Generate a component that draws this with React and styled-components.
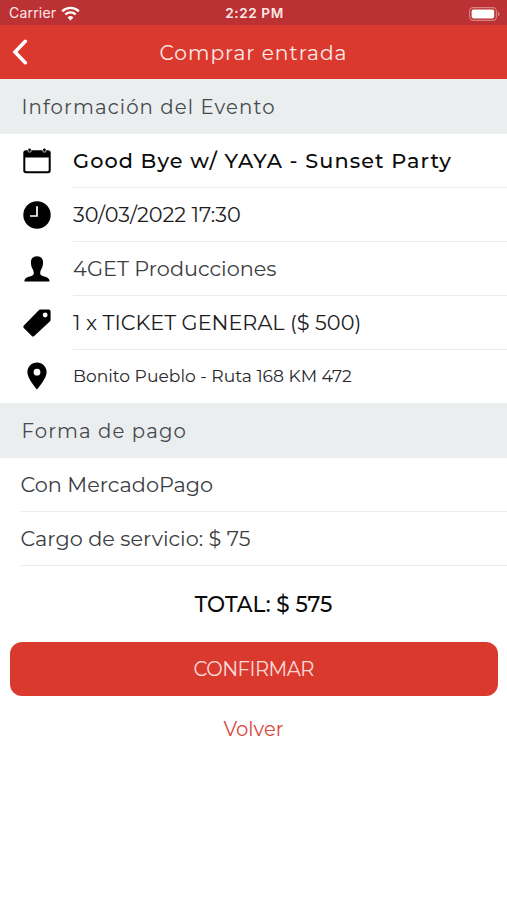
import React from "react";
import styled, { createGlobalStyle } from "styled-components";

const App = () => {
  return (
    <>
      <GlobalStyle />
      <Screen>
        <StatusBar>
          <Carrier>
            <Label $size={14} $track={0.2}>Carrier</Label>
            <WifiIcon />
          </Carrier>
          <Label $size={13.6} $track={0.6} $weight={600}>2:22 PM</Label>
          <BatterySlot>
            <BatteryIcon />
          </BatterySlot>
        </StatusBar>
        <NavBar>
          <BackButton aria-label="Volver">
            <svg width="16" height="26" viewBox="0 0 16 26">
              <path
                d="M13.3 2.3 L3 13 L13.3 23.7"
                fill="none"
                stroke="#fff"
                strokeWidth="3.6"
                strokeLinecap="round"
                strokeLinejoin="miter"
              />
            </svg>
          </BackButton>
          <Label as="h1" $size={20.2} $track={1} $drop={1.5}>Comprar entrada</Label>
        </NavBar>

        <SectionTitle>
          <Label as="h2" $size={19.7} $track={1.12} $drop={2.5}>Información del Evento</Label>
        </SectionTitle>
        <List>
          <EventRow>
            <CalendarIcon />
            <RowBody>
              <Label $size={20.8} $track={1.07} $weight={500} $drop={2} $color="#0b0b0b">
                Good Bye w/ YAYA - Sunset Party
              </Label>
            </RowBody>
          </EventRow>
          <EventRow>
            <ClockIcon />
            <RowBody>
              <Label $size={20.8} $drop={2} $color="#1c1c1e">30/03/2022 17:30</Label>
            </RowBody>
          </EventRow>
          <EventRow>
            <PersonIcon />
            <RowBody>
              <Label $size={20.8} $drop={2} $color="#3b3e42">4GET Producciones</Label>
            </RowBody>
          </EventRow>
          <EventRow>
            <TagIcon />
            <RowBody>
              <Label $size={20.8} $drop={2} $color="#1c1c1e">1 x TICKET GENERAL ($ 500)</Label>
            </RowBody>
          </EventRow>
          <EventRow $last>
            <PinIcon />
            <RowBody $last>
              <Label $size={17.15} $color="#28282a">
                Bonito Pueblo - Ruta 168 KM 472
              </Label>
            </RowBody>
          </EventRow>
        </List>

        <SectionTitle>
          <Label as="h2" $size={19.7} $track={1.12} $drop={2.5}>Forma de pago</Label>
        </SectionTitle>
        <List>
          <PaymentRow>
            <Label $size={20.8} $drop={2} $color="#3b3e42">Con MercadoPago</Label>
          </PaymentRow>
          <PaymentRow>
            <Label $size={20.8} $drop={2} $color="#3b3e42">Cargo de servicio: $ 75</Label>
          </PaymentRow>
        </List>

        <Total>
          <Label $size={21.5} $weight={500} $drop={2} $color="#0b0b0b">TOTAL: $ 575</Label>
        </Total>
        <ConfirmButton>
          <Label $size={19.6} $track={-0.5}>CONFIRMAR</Label>
        </ConfirmButton>
        <CancelButton>
          <Label $size={19.6}>Volver</Label>
        </CancelButton>
      </Screen>
    </>
  );
};

const WifiIcon = () => (
  <svg width="19" height="15" viewBox="0 0 19 15" fill="none" stroke="#fff">
    <path d="M1.2 5.3 A11.8 11.8 0 0 1 17.8 5.3" strokeWidth="2.4" />
    <path d="M4.3 8.5 A7.4 7.4 0 0 1 14.7 8.5" strokeWidth="2.3" />
    <path d="M9.5 14.4 L6.6 11.5 A4.1 4.1 0 0 1 12.4 11.5 Z" fill="#fff" stroke="none" />
  </svg>
);

const BatteryIcon = () => (
  <svg width="31" height="14" viewBox="0 0 31 14">
    <rect x="0.6" y="0.6" width="26.8" height="12.8" rx="3.6" fill="none" stroke="#d98381" strokeWidth="1.1" />
    <rect x="2.6" y="2.6" width="22.6" height="8.8" rx="1.8" fill="#fff" />
    <path d="M28.8 4.6 Q30.6 5.4 30.6 7 Q30.6 8.6 28.8 9.4 Z" fill="#d98381" />
  </svg>
);

const CalendarIcon = () => (
  <Icon viewBox="0 0 28 28">
    <path
      fillRule="evenodd"
      d="M3 3.2 H5.2 V2.6 Q5.2 1.4 6.6 1.4 Q8 1.4 8 2.6 V3.2 H20 V2.6 Q20 1.4 21.4 1.4 Q22.8 1.4 22.8 2.6 V3.2 H25 Q27.7 3.2 27.7 5.8 V23.6 Q27.7 26.2 25 26.2 H3 Q0.3 26.2 0.3 23.6 V5.8 Q0.3 3.2 3 3.2 Z M2.3 10.6 V23 Q2.3 24.3 3.6 24.3 H24.4 Q25.7 24.3 25.7 23 V10.6 Z"
    />
    <path d="M5.2 3 V5 H8 V3 M20 3 V5 H22.8 V3" fill="none" stroke="#fff" strokeWidth="0.6" />
  </Icon>
);

const ClockIcon = () => (
  <Icon viewBox="0 0 28 28">
    <circle cx="14" cy="14" r="13.7" />
    <path d="M14 5.2 V15 H7" fill="none" stroke="#fff" strokeWidth="1.7" />
  </Icon>
);

const PersonIcon = () => (
  <Icon viewBox="0 0 28 28">
    <path d="M14 1.3 C18.4 1.3 20.4 4.3 20 8.4 C19.9 10.5 19.4 11.9 18.8 13.2 C17.8 15.2 17.2 16.4 17.2 18.3 C17.2 20 18.7 20.9 21.3 21.6 C24.3 22.4 26.6 23.5 26.6 26.6 H1.4 C1.4 23.5 3.7 22.4 6.7 21.6 C9.3 20.9 10.8 20 10.8 18.3 C10.8 16.4 10.2 15.2 9.2 13.2 C8.6 11.9 8.1 10.5 8 8.4 C7.6 4.3 9.6 1.3 14 1.3 Z" />
  </Icon>
);

const TagIcon = () => (
  <Icon viewBox="0 0 28 28">
    <path
      fillRule="evenodd"
      d="M17.6 0.6 L25.8 0.6 Q27.6 0.7 27.6 2.4 V10.7 Q27.6 11.8 26.8 12.6 L11.2 26.9 Q9.9 28 8.8 26.9 L0.8 18.9 Q-0.3 17.7 0.9 16.5 L15.5 1.5 Q16.4 0.6 17.6 0.6 Z M22.2 3.6 A2.4 2.4 0 1 0 22.2 8.4 A2.4 2.4 0 1 0 22.2 3.6 Z"
    />
  </Icon>
);

const PinIcon = () => (
  <Icon viewBox="0 0 28 28">
    <path
      fillRule="evenodd"
      d="M14 0.6 C19.3 0.6 23.6 4.8 23.6 10.1 C23.6 17 14 27.5 14 27.5 C14 27.5 4.4 17 4.4 10.1 C4.4 4.8 8.7 0.6 14 0.6 Z M14 6.8 A3.4 3.4 0 1 0 14 13.6 A3.4 3.4 0 1 0 14 6.8 Z"
    />
  </Icon>
);

const GlobalStyle = createGlobalStyle`
  * {
    box-sizing: border-box;
    margin: 0;
    padding: 0;
  }
  body {
    background-color: white;
    font-family: Montserrat, Inter, sans-serif;
  }
  button {
    border: none;
    background: none;
    font-family: inherit;
    color: inherit;
  }
`;

const Screen = styled.main`
  display: flex;
  flex-direction: column;
  height: 900px;
  overflow: hidden;
  background-color: white;
`;

const Label = styled.span`
  padding-top: ${({ $drop }) => $drop || 0}px;
  font-size: ${({ $size }) => $size}px;
  font-weight: ${({ $weight }) => $weight || 400};
  letter-spacing: ${({ $track }) => $track || 0}px;
  color: ${({ $color }) => $color || "inherit"};
  line-height: 1.2;
  white-space: nowrap;
`;

const StatusBar = styled.header`
  display: grid;
  grid-template-columns: 1fr auto 1fr;
  align-items: center;
  height: 25px;
  padding: 2px 7px 0 9px;
  background-color: #bb3134;
  color: #fbe9e8;
  font-family: Inter, sans-serif;
`;

const Carrier = styled.div`
  display: flex;
  align-items: center;
  gap: 5px;
`;

const BatterySlot = styled.div`
  display: flex;
  justify-content: flex-end;
`;

const NavBar = styled.nav`
  display: grid;
  grid-template-columns: 60px auto 60px;
  justify-content: space-between;
  align-items: center;
  height: 54px;
  background-color: #db392e;
  color: #fdecea;
`;

const BackButton = styled.button`
  display: flex;
  padding-left: 12px;
`;

const SectionTitle = styled.div`
  display: flex;
  align-items: center;
  height: 55px;
  padding-left: 21.5px;
  background-color: #eaeeef;
  color: #46494d;
`;

const List = styled.div`
  display: flex;
  flex-direction: column;
`;

const EventRow = styled.div`
  display: flex;
  align-items: center;
  height: ${({ $last }) => ($last ? 53 : 54)}px;
  padding-left: 23px;
`;

const Icon = styled.svg`
  flex: none;
  width: 28px;
  height: 28px;
  margin: -1px 22px 0 0;
  fill: black;
`;

const RowBody = styled.div`
  display: flex;
  flex: 1;
  align-items: center;
  height: 100%;
  border-bottom: ${({ $last }) => ($last ? "none" : "1px solid #ebebec")};
`;

const PaymentRow = styled.div`
  display: flex;
  align-items: center;
  height: 54px;
  margin-left: 20.5px;
  border-bottom: 1px solid #ebebec;
`;

const Total = styled.div`
  display: flex;
  justify-content: center;
  align-items: center;
  height: 76px;
  padding-left: 20px;
`;

const ConfirmButton = styled.button`
  height: 54.4px;
  margin: 0 9px 0 9.5px;
  padding-top: 1.5px;
  border-radius: 12px;
  background-color: #da392e;
  color: #fbdcd9;
`;

const CancelButton = styled.button`
  align-self: center;
  margin-top: 21.6px;
  color: #d9453c;
`;

export default App;
